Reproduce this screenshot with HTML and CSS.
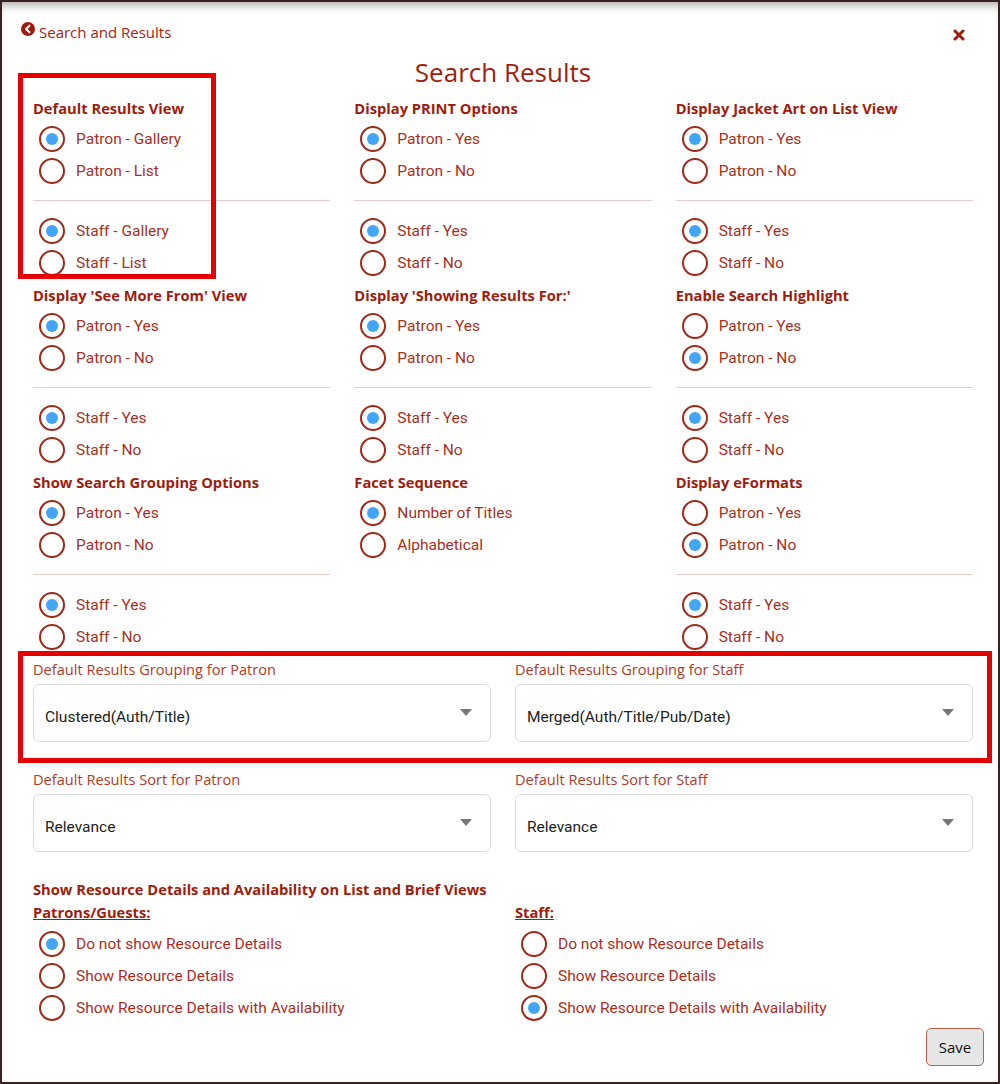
FILE: index.html
```html
<!DOCTYPE html>
<html lang="en">
<head>
    <meta charset="UTF-8">
    <title>Search Results Settings</title>
    <link rel="stylesheet" href="styles.css">
</head>
<body>
    <div id="frame">
        <div class="top-bar">
            <a class="back-link" href="#">
                <svg class="back-icon" viewBox="0 0 16 16" width="14" height="14">
                    <circle cx="8" cy="8" r="8" fill="#9e1c0c"/>
                    <path d="M9.6 4.2 L5.8 8 L9.6 11.8" fill="none" stroke="#fff" stroke-width="2.4" stroke-linecap="round" stroke-linejoin="round"/>
                </svg>
                Search and Results
            </a>
            <a class="close-btn" href="#" title="Close">
                <svg viewBox="0 0 12 12" width="12" height="12">
                    <path d="M2 2 L10 10 M10 2 L2 10" stroke="#9e1c0c" stroke-width="3" stroke-linecap="round"/>
                </svg>
            </a>
        </div>

        <h1 class="page-title">Search Results</h1>

        <div class="options-grid">
            <div class="option-group">
                <h3>Default Results View</h3>
                <label class="radio"><input type="radio" name="view-p" checked> Patron - Gallery</label>
                <label class="radio"><input type="radio" name="view-p"> Patron - List</label>
                <hr>
                <label class="radio"><input type="radio" name="view-s" checked> Staff - Gallery</label>
                <label class="radio"><input type="radio" name="view-s"> Staff - List</label>
            </div>
            <div class="option-group">
                <h3>Display PRINT Options</h3>
                <label class="radio"><input type="radio" name="print-p" checked> Patron - Yes</label>
                <label class="radio"><input type="radio" name="print-p"> Patron - No</label>
                <hr>
                <label class="radio"><input type="radio" name="print-s" checked> Staff - Yes</label>
                <label class="radio"><input type="radio" name="print-s"> Staff - No</label>
            </div>
            <div class="option-group">
                <h3>Display Jacket Art on List View</h3>
                <label class="radio"><input type="radio" name="jacket-p" checked> Patron - Yes</label>
                <label class="radio"><input type="radio" name="jacket-p"> Patron - No</label>
                <hr>
                <label class="radio"><input type="radio" name="jacket-s" checked> Staff - Yes</label>
                <label class="radio"><input type="radio" name="jacket-s"> Staff - No</label>
            </div>

            <div class="option-group">
                <h3>Display 'See More From' View</h3>
                <label class="radio"><input type="radio" name="more-p" checked> Patron - Yes</label>
                <label class="radio"><input type="radio" name="more-p"> Patron - No</label>
                <hr>
                <label class="radio"><input type="radio" name="more-s" checked> Staff - Yes</label>
                <label class="radio"><input type="radio" name="more-s"> Staff - No</label>
            </div>
            <div class="option-group">
                <h3>Display 'Showing Results For:'</h3>
                <label class="radio"><input type="radio" name="showing-p" checked> Patron - Yes</label>
                <label class="radio"><input type="radio" name="showing-p"> Patron - No</label>
                <hr>
                <label class="radio"><input type="radio" name="showing-s" checked> Staff - Yes</label>
                <label class="radio"><input type="radio" name="showing-s"> Staff - No</label>
            </div>
            <div class="option-group">
                <h3>Enable Search Highlight</h3>
                <label class="radio"><input type="radio" name="highlight-p"> Patron - Yes</label>
                <label class="radio"><input type="radio" name="highlight-p" checked> Patron - No</label>
                <hr>
                <label class="radio"><input type="radio" name="highlight-s" checked> Staff - Yes</label>
                <label class="radio"><input type="radio" name="highlight-s"> Staff - No</label>
            </div>

            <div class="option-group">
                <h3>Show Search Grouping Options</h3>
                <label class="radio"><input type="radio" name="grouping-p" checked> Patron - Yes</label>
                <label class="radio"><input type="radio" name="grouping-p"> Patron - No</label>
                <hr>
                <label class="radio"><input type="radio" name="grouping-s" checked> Staff - Yes</label>
                <label class="radio"><input type="radio" name="grouping-s"> Staff - No</label>
            </div>
            <div class="option-group">
                <h3>Facet Sequence</h3>
                <label class="radio"><input type="radio" name="facet" checked> Number of Titles</label>
                <label class="radio"><input type="radio" name="facet"> Alphabetical</label>
            </div>
            <div class="option-group">
                <h3>Display eFormats</h3>
                <label class="radio"><input type="radio" name="eformats-p"> Patron - Yes</label>
                <label class="radio"><input type="radio" name="eformats-p" checked> Patron - No</label>
                <hr>
                <label class="radio"><input type="radio" name="eformats-s" checked> Staff - Yes</label>
                <label class="radio"><input type="radio" name="eformats-s"> Staff - No</label>
            </div>
        </div>

        <div class="select-grid">
            <div class="select-field">
                <label>Default Results Grouping for Patron</label>
                <div class="select-box">
                    <span>Clustered(Auth/Title)</span>
                    <span class="caret"></span>
                </div>
            </div>
            <div class="select-field">
                <label>Default Results Grouping for Staff</label>
                <div class="select-box">
                    <span>Merged(Auth/Title/Pub/Date)</span>
                    <span class="caret"></span>
                </div>
            </div>
            <div class="select-field">
                <label>Default Results Sort for Patron</label>
                <div class="select-box">
                    <span>Relevance</span>
                    <span class="caret"></span>
                </div>
            </div>
            <div class="select-field">
                <label>Default Results Sort for Staff</label>
                <div class="select-box">
                    <span>Relevance</span>
                    <span class="caret"></span>
                </div>
            </div>
        </div>

        <div class="details-section">
            <h3>Show Resource Details and Availability on List and Brief Views</h3>
            <div class="details-grid">
                <div class="details-col">
                    <h4>Patrons/Guests:</h4>
                    <label class="radio"><input type="radio" name="details-p" checked> Do not show Resource Details</label>
                    <label class="radio"><input type="radio" name="details-p"> Show Resource Details</label>
                    <label class="radio"><input type="radio" name="details-p"> Show Resource Details with Availability</label>
                </div>
                <div class="details-col">
                    <h4>Staff:</h4>
                    <label class="radio"><input type="radio" name="details-s"> Do not show Resource Details</label>
                    <label class="radio"><input type="radio" name="details-s"> Show Resource Details</label>
                    <label class="radio"><input type="radio" name="details-s" checked> Show Resource Details with Availability</label>
                </div>
            </div>
        </div>

        <div class="actions">
            <button class="save-btn">Save</button>
        </div>

        <!-- annotation boxes drawn over the form -->
        <div class="mark mark-view"></div>
        <div class="mark mark-grouping"></div>
    </div>
</body>
</html>
```

FILE: styles.css
```css
body {
    margin: 0;
    background-color: #ffffff;
    font-family: Roboto, "Liberation Sans", sans-serif;
}
#frame {
    position: relative;
    width: 1000px;
    height: 1084px;
    box-sizing: border-box;
    border: 2px solid #3a2020;
    padding: 0 25px 0 31px;
    box-shadow: inset 0 9px 10px -6px rgba(0,0,0,0.35);
    overflow: hidden;
}
.top-bar {
    display: flex;
    justify-content: space-between;
    align-items: flex-start;
    padding-top: 20px;
    margin-left: -12px;
}
.back-link {
    display: flex;
    align-items: flex-start;
    gap: 4px;
    color: #a32310;
    text-decoration: none;
    font-family: "Open Sans", sans-serif;
    font-size: 15px;
    line-height: 20px;
}
.close-btn {
    margin-top: 7px;
    margin-right: 8px;
    line-height: 0;
}
.page-title {
    margin: 15px 0 0 0;
    text-align: center;
    color: #a01e0c;
    font-family: "Open Sans", sans-serif;
    font-weight: 400;
    font-size: 26px;
    line-height: 30px;
}
.options-grid {
    display: grid;
    grid-template-columns: repeat(3, 1fr);
    column-gap: 24px;
    margin-top: 10px;
}
.option-group {
    padding-bottom: 5px;
}
.option-group h3, .details-section h3 {
    margin: 0 0 4px 0;
    color: #9e1c0c;
    font-family: "Open Sans", sans-serif;
    font-weight: 700;
    font-size: 14.7px;
    line-height: 22px;
    white-space: nowrap;
}
.option-group hr {
    margin: 13px 0 14px 0;
    border: none;
    border-top: 1px solid #e6cdc8;
}
.radio {
    display: flex;
    align-items: center;
    height: 32px;
    padding-left: 6px;
    color: #a8301d;
    font-size: 15.5px;
    cursor: pointer;
}
.radio input {
    appearance: none;
    -webkit-appearance: none;
    margin: 0 11px 0 0;
    width: 26px;
    height: 26px;
    box-sizing: border-box;
    border: 2px solid #9e2a18;
    border-radius: 50%;
    display: flex;
    align-items: center;
    justify-content: center;
    flex-shrink: 0;
}
.radio input:checked::after {
    content: "";
    width: 12px;
    height: 12px;
    border-radius: 50%;
    background-color: #42a5f5;
}
.select-grid {
    display: grid;
    grid-template-columns: 1fr 1fr;
    column-gap: 24px;
    row-gap: 27px;
    margin-top: 1px;
}
.select-field label {
    display: block;
    color: #b33a25;
    font-family: "Open Sans", sans-serif;
    font-size: 14.6px;
    line-height: 20px;
    margin-bottom: 5px;
}
.select-box {
    display: flex;
    justify-content: space-between;
    align-items: center;
    height: 58px;
    box-sizing: border-box;
    padding: 7px 18px 0 11px;
    border: 1px solid #dcdcdc;
    border-radius: 6px;
    color: #222222;
    font-size: 15.5px;
}
.caret {
    width: 0;
    height: 0;
    margin-top: -9px;
    border-left: 6px solid transparent;
    border-right: 6px solid transparent;
    border-top: 7px solid #777777;
}
.details-section {
    margin-top: 26px;
}
.details-section h3 {
    margin-bottom: 1px;
}
.details-grid {
    display: grid;
    grid-template-columns: 1fr 1fr;
    column-gap: 24px;
}
.details-col h4 {
    margin: 0 0 5px 0;
    color: #9e1c0c;
    font-family: "Open Sans", sans-serif;
    font-weight: 700;
    font-size: 14.7px;
    line-height: 22px;
    text-decoration: underline;
}
.actions {
    display: flex;
    justify-content: flex-end;
    margin-right: -11px;
    margin-top: 4px;
}
.save-btn {
    width: 58px;
    height: 38px;
    background-color: #e6e6e6;
    border: 1px solid #c3604c;
    border-radius: 5px;
    font-family: "Open Sans", sans-serif;
    font-size: 15px;
    color: #111111;
    cursor: pointer;
}
.mark {
    position: absolute;
    border: 5px solid #e60000;
    pointer-events: none;
}
.mark-view {
    left: 16px;
    top: 71px;
    width: 188px;
    height: 196px;
}
.mark-grouping {
    left: 16px;
    top: 649px;
    width: 964px;
    height: 102px;
}
```
